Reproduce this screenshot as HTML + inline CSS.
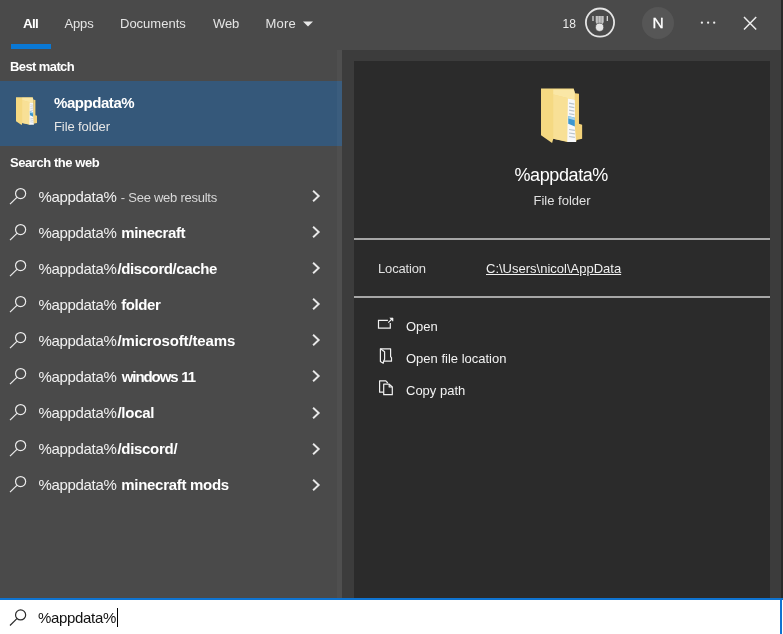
<!DOCTYPE html>
<html>
<head>
<meta charset="utf-8">
<title>Search</title>
<style>
*{margin:0;padding:0;box-sizing:border-box}
html,body{width:783px;height:634px;overflow:hidden;background:#3c3c3c}
body{position:relative;will-change:transform;font-family:"Liberation Sans",sans-serif;color:#fff;-webkit-font-smoothing:antialiased}
.abs{position:absolute;white-space:pre;line-height:1}
#top{position:absolute;left:0;top:0;width:783px;height:49.500px;background:#4a4a4a}
#left{position:absolute;left:0;top:49px;width:341.500px;height:549px;background:#4a4a4a}
#right{position:absolute;left:342px;top:50px;width:441px;height:548px;background:#3c3c3c}
#card{position:absolute;left:354px;top:61px;width:416px;height:537px;background:#2b2b2b}
#edge{position:absolute;left:781px;top:0;width:2px;height:598px;background:#2a2a2a}
#sel{position:absolute;left:0;top:81px;width:341.500px;height:65px;background:#35587a}
#uline{position:absolute;left:11px;top:44px;width:40px;height:5px;background:#0a78d4}
.tab{font-size:13px;color:#e4e4e4;top:17px}
.hd{font-size:13px;font-weight:bold;letter-spacing:-0.5px}
.row{position:absolute;left:0;width:342px;height:36px}
.row .t{position:absolute;left:38.500px;top:10px;font-size:15px;line-height:1;white-space:pre;letter-spacing:-0.33px;color:#f2f2f2}
.row .t b{letter-spacing:-0.4px;color:#fff;margin-left:1px}
.row .t small{margin-left:1px;font-size:13px;letter-spacing:-0.25px;color:#d8d8d8}
.row svg.s{position:absolute;left:9px;top:8px}
.row svg.c{position:absolute;left:311.300px;top:10.300px}
.sep{position:absolute;left:354px;width:416px;height:2px;background:#a6a6a6}
.act{font-size:13px;left:406px;color:#f2f2f2}
#box{position:absolute;left:0;top:597.500px;width:783px;height:36.500px;background:#fff;border-top:2.500px solid #0f74d1}
#boxr{position:absolute;left:780px;top:598px;width:1.500px;height:36px;background:#0f74d1}
</style>
</head>
<body>
<div id="top"></div>
<div id="left"></div>
<div id="right"></div>
<div id="card"></div>
<div id="edge"></div>

<!-- tabs -->
<span class="abs tab" style="left:23px;top:16.500px;font-size:13.500px;font-weight:bold;color:#fff;letter-spacing:-0.7px">All</span>
<span class="abs tab" style="left:64.5px;letter-spacing:-0.15px">Apps</span>
<span class="abs tab" style="left:120px">Documents</span>
<span class="abs tab" style="left:213px;letter-spacing:-0.1px">Web</span>
<span class="abs tab" style="left:265.5px;letter-spacing:0.2px">More</span>
<svg class="abs" style="left:302px;top:21px" width="12" height="6" viewBox="0 0 12 6"><path d="M1 0.5h10l-5 5z" fill="#e8e8e8"/></svg>
<div id="uline"></div>

<!-- top right -->
<span class="abs" style="left:562.500px;top:18px;font-size:12px;color:#ececec">18</span>
<svg class="abs" style="left:584px;top:6px" width="32" height="34" viewBox="584 6 32 34">
  <circle cx="600" cy="22.600" r="14.100" fill="none" stroke="#e4e4e4" stroke-width="1.800"/>
  <path d="M592.400 16.100h1.200v4.900h-1.200zM606.700 16.100h1.200v4.900h-1.200z" fill="#e0e0e0"/>
  <path d="M595.700 16.100h8v6l-1.500 3h-5l-1.500 -3z" fill="#c2c2c2"/>
  <path d="M598.300 16.100v7M601.100 16.100v7" stroke="#8a8a8a" stroke-width="0.700"/>
  <circle cx="599.600" cy="27.300" r="4.100" fill="#e6e6e6" stroke="#4a4a4a" stroke-width="0.700"/>
</svg>
<div class="abs" style="left:641.700px;top:7px;width:32px;height:32px;border-radius:16px;background:#565656"></div>
<span class="abs" style="left:652.400px;top:15px;font-size:15.500px;color:#fff;-webkit-text-stroke:0.300px #fff">N</span>
<svg class="abs" style="left:699px;top:21px" width="18" height="4" viewBox="0 0 18 4"><circle cx="2.900" cy="1.700" r="1.150" fill="#ececec"/><circle cx="9.100" cy="1.700" r="1.150" fill="#ececec"/><circle cx="15.200" cy="1.700" r="1.150" fill="#ececec"/></svg>
<svg class="abs" style="left:742px;top:16px" width="16" height="16" viewBox="0 0 16 16"><path d="M2 0.900L14.200 13.500M14.200 0.900L2 13.500" stroke="#ececec" stroke-width="1.500" fill="none"/></svg>

<!-- left panel -->
<span class="abs hd" style="left:10px;top:60px;letter-spacing:-0.6px">Best match</span>
<div id="sel"></div>
<div class="abs" style="left:337px;top:49.500px;width:4.500px;height:548px;background:rgba(255,255,255,0.03)"></div>
<svg class="abs" style="left:15.700px;top:97px" width="21.200" height="28.400" viewBox="95 85 355 475">
  <path d="M95 90H375L385 130V520L320 548L200 520L190 555L95 490z" fill="#f5d982"/>
  <path d="M200 97H376L385 130V185L330 172L200 140z" fill="#fae7a6"/>
  <path d="M200 140L330 172V546L200 520z" fill="#f8e096"/>
  <path d="M325 175L385 185L395 400V548H320z" fill="#f7f8fa"/>
  <path d="M335 215l45 8M335 245l45 8M335 275l45 8M335 305l45 8M335 440l50 8M335 470l50 8M335 500l50 8" stroke="#b9c3cc" stroke-width="10" fill="none"/>
  <path d="M328 325L385 340V415L328 390z" fill="#3d97cf"/>
  <path d="M328 325L385 340V362L328 347z" fill="#a5d3ee"/>
  <path d="M385 130L420 135V390L447 400V520L400 530L395 548L385 420z" fill="#f3d279"/>
</svg>
<span class="abs" style="left:54px;top:95px;font-size:15px;font-weight:bold;letter-spacing:-0.44px">%appdata%</span>
<span class="abs" style="left:54px;top:120px;font-size:13px;color:#e6e6e6;letter-spacing:-0.1px">File folder</span>
<span class="abs hd" style="left:10px;top:156px;letter-spacing:-0.43px">Search the web</span>

<div id="rows">
<div class="row" style="top:178.90px"><svg class="s" width="19" height="19" viewBox="0 0 19 19"><circle cx="11.600" cy="6.600" r="5.050" fill="none" stroke="#ececec" stroke-width="1.200"/><path d="M7.900 10.300L1 17.200" stroke="#ececec" stroke-width="1.200" fill="none"/></svg><span class="t">%appdata%<small> - See web results</small></span><svg class="c" width="10" height="14" viewBox="0 0 10 14"><path d="M2.100 1.800L7.700 7L2.100 12.200" stroke="#e8e8e8" stroke-width="1.900" fill="none"/></svg></div>
<div class="row" style="top:214.96px"><svg class="s" width="19" height="19" viewBox="0 0 19 19"><circle cx="11.600" cy="6.600" r="5.050" fill="none" stroke="#ececec" stroke-width="1.200"/><path d="M7.900 10.300L1 17.200" stroke="#ececec" stroke-width="1.200" fill="none"/></svg><span class="t">%appdata%<b> minecraft</b></span><svg class="c" width="10" height="14" viewBox="0 0 10 14"><path d="M2.100 1.800L7.700 7L2.100 12.200" stroke="#e8e8e8" stroke-width="1.900" fill="none"/></svg></div>
<div class="row" style="top:251.02px"><svg class="s" width="19" height="19" viewBox="0 0 19 19"><circle cx="11.600" cy="6.600" r="5.050" fill="none" stroke="#ececec" stroke-width="1.200"/><path d="M7.900 10.300L1 17.200" stroke="#ececec" stroke-width="1.200" fill="none"/></svg><span class="t">%appdata%<b>/discord/cache</b></span><svg class="c" width="10" height="14" viewBox="0 0 10 14"><path d="M2.100 1.800L7.700 7L2.100 12.200" stroke="#e8e8e8" stroke-width="1.900" fill="none"/></svg></div>
<div class="row" style="top:287.08px"><svg class="s" width="19" height="19" viewBox="0 0 19 19"><circle cx="11.600" cy="6.600" r="5.050" fill="none" stroke="#ececec" stroke-width="1.200"/><path d="M7.900 10.300L1 17.200" stroke="#ececec" stroke-width="1.200" fill="none"/></svg><span class="t">%appdata%<b> folder</b></span><svg class="c" width="10" height="14" viewBox="0 0 10 14"><path d="M2.100 1.800L7.700 7L2.100 12.200" stroke="#e8e8e8" stroke-width="1.900" fill="none"/></svg></div>
<div class="row" style="top:323.14px"><svg class="s" width="19" height="19" viewBox="0 0 19 19"><circle cx="11.600" cy="6.600" r="5.050" fill="none" stroke="#ececec" stroke-width="1.200"/><path d="M7.900 10.300L1 17.200" stroke="#ececec" stroke-width="1.200" fill="none"/></svg><span class="t">%appdata%<b style="letter-spacing:-0.15px">/microsoft/teams</b></span><svg class="c" width="10" height="14" viewBox="0 0 10 14"><path d="M2.100 1.800L7.700 7L2.100 12.200" stroke="#e8e8e8" stroke-width="1.900" fill="none"/></svg></div>
<div class="row" style="top:359.20px"><svg class="s" width="19" height="19" viewBox="0 0 19 19"><circle cx="11.600" cy="6.600" r="5.050" fill="none" stroke="#ececec" stroke-width="1.200"/><path d="M7.900 10.300L1 17.200" stroke="#ececec" stroke-width="1.200" fill="none"/></svg><span class="t">%appdata%<b style="letter-spacing:-1.1px;margin-left:1.500px;word-spacing:0.800px"> windows 11</b></span><svg class="c" width="10" height="14" viewBox="0 0 10 14"><path d="M2.100 1.800L7.700 7L2.100 12.200" stroke="#e8e8e8" stroke-width="1.900" fill="none"/></svg></div>
<div class="row" style="top:395.26px"><svg class="s" width="19" height="19" viewBox="0 0 19 19"><circle cx="11.600" cy="6.600" r="5.050" fill="none" stroke="#ececec" stroke-width="1.200"/><path d="M7.900 10.300L1 17.200" stroke="#ececec" stroke-width="1.200" fill="none"/></svg><span class="t">%appdata%<b style="letter-spacing:-0.25px">/local</b></span><svg class="c" width="10" height="14" viewBox="0 0 10 14"><path d="M2.100 1.800L7.700 7L2.100 12.200" stroke="#e8e8e8" stroke-width="1.900" fill="none"/></svg></div>
<div class="row" style="top:431.32px"><svg class="s" width="19" height="19" viewBox="0 0 19 19"><circle cx="11.600" cy="6.600" r="5.050" fill="none" stroke="#ececec" stroke-width="1.200"/><path d="M7.900 10.300L1 17.200" stroke="#ececec" stroke-width="1.200" fill="none"/></svg><span class="t">%appdata%<b style="letter-spacing:-0.3px">/discord/</b></span><svg class="c" width="10" height="14" viewBox="0 0 10 14"><path d="M2.100 1.800L7.700 7L2.100 12.200" stroke="#e8e8e8" stroke-width="1.900" fill="none"/></svg></div>
<div class="row" style="top:467.38px"><svg class="s" width="19" height="19" viewBox="0 0 19 19"><circle cx="11.600" cy="6.600" r="5.050" fill="none" stroke="#ececec" stroke-width="1.200"/><path d="M7.900 10.300L1 17.200" stroke="#ececec" stroke-width="1.200" fill="none"/></svg><span class="t">%appdata%<b style="letter-spacing:-0.3px"> minecraft mods</b></span><svg class="c" width="10" height="14" viewBox="0 0 10 14"><path d="M2.100 1.800L7.700 7L2.100 12.200" stroke="#e8e8e8" stroke-width="1.900" fill="none"/></svg></div>
</div>

<!-- right card -->
<svg class="abs" style="left:541px;top:87.500px" width="41.500" height="55.500" viewBox="95 85 355 475">
  <path d="M95 90H375L385 130V520L320 548L200 520L190 555L95 490z" fill="#f5d982"/>
  <path d="M200 97H376L385 130V185L330 172L200 140z" fill="#fae7a6"/>
  <path d="M200 140L330 172V546L200 520z" fill="#f8e096"/>
  <path d="M325 175L385 185L395 400V548H320z" fill="#f7f8fa"/>
  <path d="M335 215l45 8M335 245l45 8M335 275l45 8M335 305l45 8M335 440l50 8M335 470l50 8M335 500l50 8" stroke="#b9c3cc" stroke-width="10" fill="none"/>
  <path d="M328 325L385 340V415L328 390z" fill="#3d97cf"/>
  <path d="M328 325L385 340V362L328 347z" fill="#a5d3ee"/>
  <path d="M385 130L420 135V390L447 400V520L400 530L395 548L385 420z" fill="#f3d279"/>
</svg>
<span class="abs" style="left:514.500px;top:166px;font-size:18px;letter-spacing:-0.4px">%appdata%</span>
<span class="abs" style="left:533.500px;top:194px;font-size:13px;color:#e0e0e0">File folder</span>
<div class="sep" style="top:238px"></div>
<span class="abs" style="left:378px;top:262px;font-size:13px;color:#e0e0e0;letter-spacing:-0.15px">Location</span>
<span class="abs" style="left:486px;top:262px;font-size:13px;color:#f0f0f0;text-decoration:underline">C:\Users\nicol\AppData</span>
<div class="sep" style="top:296px"></div>

<svg class="abs" style="left:372px;top:312px" width="28" height="24" viewBox="372 312 28 24" fill="none" stroke="#f0f0f0" stroke-width="1.200">
  <path d="M387.900 320.400H378.500V328.200H390.300V323"/>
  <path d="M388.300 322.600L392 318.900"/>
  <path d="M389.800 318H393V321.200z" fill="#f0f0f0" stroke-width="0.600"/>
</svg>
<svg class="abs" style="left:372px;top:342px" width="28" height="26" viewBox="372 342 28 26" fill="none" stroke="#f0f0f0" stroke-width="1.200" stroke-linejoin="round">
  <path d="M380.400 348.800H390.600V356.800L391.500 357.600V361.200H383.700"/>
  <path d="M380.400 348.800V361.600L383.200 363.300L383.700 361.200L384.600 359.200V351.800z"/>
</svg>
<svg class="abs" style="left:372px;top:374px" width="28" height="26" viewBox="372 374 28 26" fill="none" stroke="#f0f0f0" stroke-width="1.200" stroke-linejoin="round">
  <path d="M383.500 392.200H379.600V380.800H385.800L387.800 383"/>
  <path d="M383.700 384.200H389.200L392.300 387V394.700H383.700z"/>
  <path d="M389.200 384.200V387H392.300"/>
</svg>
<span class="abs act" style="top:320px">Open</span>
<span class="abs act" style="top:352px">Open file location</span>
<span class="abs act" style="top:384px">Copy path</span>

<!-- search box -->
<div id="box"></div>
<div id="boxr"></div>
<svg class="abs" style="left:9px;top:608.400px" width="19" height="19" viewBox="0 0 19 19"><circle cx="11.600" cy="6.900" r="5.050" fill="none" stroke="#2a2a2a" stroke-width="1.200"/><path d="M7.900 10.600L1 17.500" stroke="#2a2a2a" stroke-width="1.200" fill="none"/></svg>
<span class="abs" style="left:38px;top:610px;font-size:15px;color:#111;letter-spacing:-0.33px">%appdata%</span>
<div class="abs" style="left:117px;top:608px;width:1px;height:19px;background:#000"></div>
</body>
</html>
